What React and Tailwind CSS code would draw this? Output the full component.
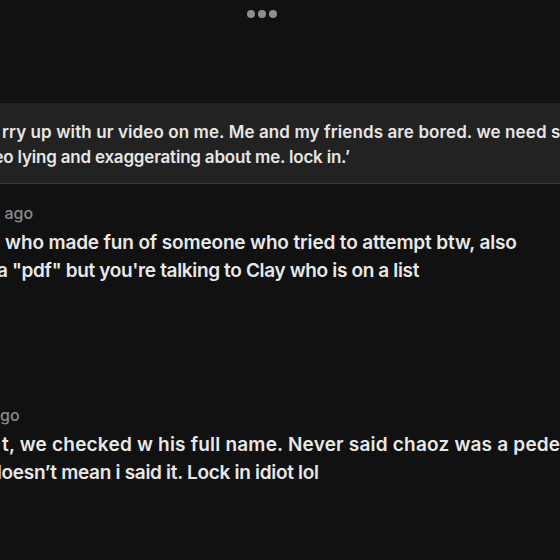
import React from 'react';

const Line = ({ text, shift, className = '' }) => (
  <div className={`whitespace-nowrap ${className}`} style={{ marginLeft: shift }}>
    {text}
  </div>
);

const App = () => {
  return (
    <div className="w-[560px] h-[560px] overflow-hidden bg-[#111111] font-['Inter','Liberation_Sans',sans-serif] antialiased">
      {/* more menu */}
      <div className="flex gap-[3px] pt-[10px] pl-[247px]">
        <span className="w-[8px] h-[8px] rounded-full bg-[#8e8e8e]" />
        <span className="w-[8px] h-[8px] rounded-full bg-[#8e8e8e]" />
        <span className="w-[8px] h-[8px] rounded-full bg-[#8e8e8e]" />
      </div>

      {/* quoted message */}
      <div className="mt-[85px] bg-[#222222] border-b border-[#3a3a3a] pt-[17px] pb-[13px] text-[17px] leading-[25px] font-semibold text-[#e6e6e6]">
        <Line text="rry up with ur video on me. Me and my friends are bored. we need s" shift={2} className="tracking-[0.1px]" />
        <Line text="deo lying and exaggerating about me. lock in.’" shift={-17} className="tracking-[-0.2px]" />
      </div>

      {/* comment 1 */}
      <div className="mt-[19px]">
        <Line text="1h ago" shift={-16} className="text-[16px] leading-[20px] font-medium text-[#8a8a8a]" />
        <div className="mt-[6px] text-[19px] leading-[28px] font-semibold text-[#e8e8e8]">
          <Line text="n who made fun of someone who tried to attempt btw, also" shift={-11} className="tracking-[-0.15px]" />
          <Line text="a &quot;pdf&quot; but you're talking to Clay who is on a list" shift={-3} className="tracking-[-0.35px]" />
        </div>
      </div>

      {/* comment 2 */}
      <div className="mt-[120px]">
        <Line text="ago" shift={-9} className="text-[16px] leading-[20px] font-medium text-[#8a8a8a]" />
        <div className="mt-[6px] text-[19px] leading-[28px] font-semibold text-[#e8e8e8]">
          <Line text="t, we checked w his full name. Never said chaoz was a pede" shift={2} className="tracking-[0.2px]" />
          <Line text="doesn’t mean i said it. Lock in idiot lol" shift={-10} className="tracking-[-0.3px]" />
        </div>
      </div>
    </div>
  );
};

export default App;
